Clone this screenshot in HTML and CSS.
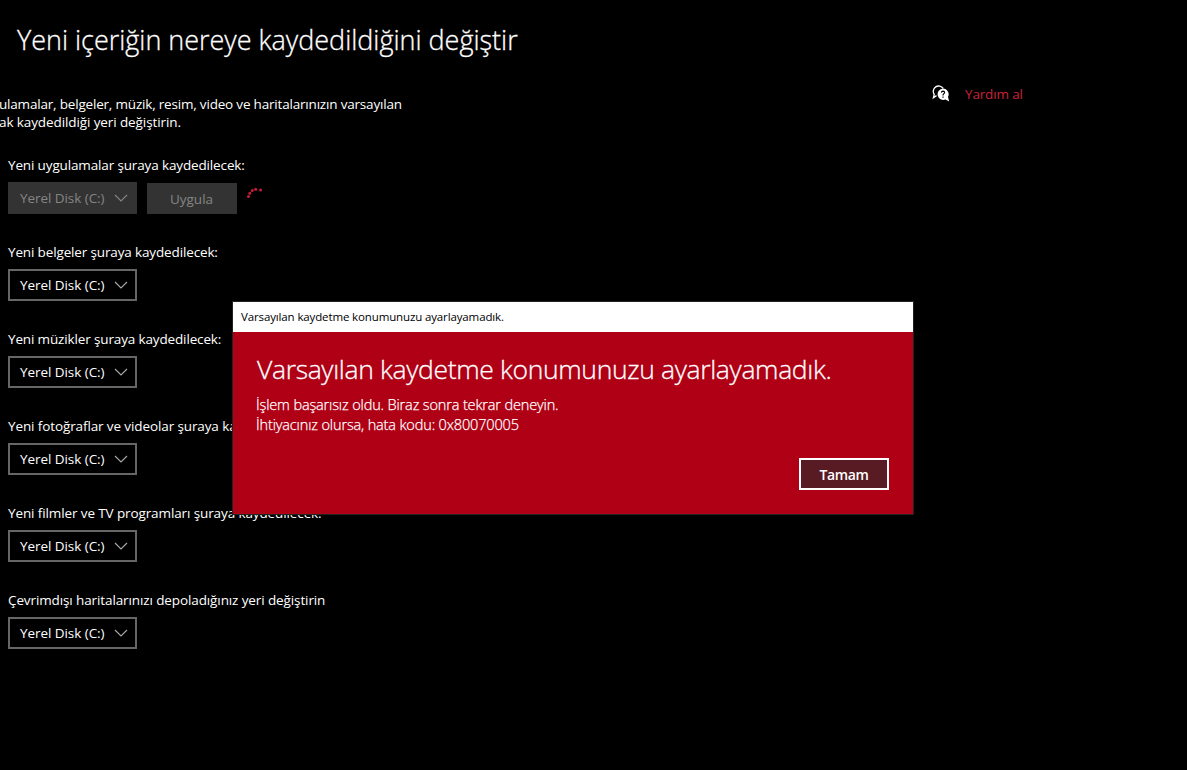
FILE: index.html
```html
<!DOCTYPE html>
<html lang="tr">
<head>
    <meta charset="UTF-8">
    <meta name="viewport" content="width=device-width, initial-scale=1.0">
    <title>Ayarlar</title>
    <link rel="stylesheet" href="styles.css">
</head>
<body>
    <svg class="defs" width="0" height="0">
        <symbol id="chevron" viewBox="0 0 14 8">
            <path d="M1 1 L7 7 L13 1" fill="none" stroke="currentColor" stroke-width="1.1"/>
        </symbol>
    </svg>

    <h1>Yeni içeriğin nereye kaydedildiğini değiştir</h1>

    <div class="content">
        <main>
            <p class="intro">ulamalar, belgeler, müzik, resim, video ve haritalarınızın varsayılan<br><span class="intro-end">ak kaydedildiği yeri değiştirin.</span></p>

            <div class="setting">
                <label>Yeni uygulamalar şuraya kaydedilecek:</label>
                <div class="row">
                    <button class="select disabled"><span>Yerel Disk (C:)</span><svg class="chevron"><use href="#chevron"/></svg></button>
                    <button class="apply">Uygula</button>
                    <svg class="spinner" width="18" height="14" viewBox="0 0 18 14">
                        <circle cx="2.5" cy="10.5" r="1.5"/>
                        <circle cx="3.8" cy="7.2" r="1.5"/>
                        <circle cx="6.3" cy="4.6" r="1.5"/>
                        <circle cx="9.6" cy="3.3" r="1.5"/>
                        <circle cx="14.6" cy="4" r="1.5"/>
                    </svg>
                </div>
            </div>

            <div class="setting">
                <label>Yeni belgeler şuraya kaydedilecek:</label>
                <button class="select"><span>Yerel Disk (C:)</span><svg class="chevron"><use href="#chevron"/></svg></button>
            </div>

            <div class="setting">
                <label>Yeni müzikler şuraya kaydedilecek:</label>
                <button class="select"><span>Yerel Disk (C:)</span><svg class="chevron"><use href="#chevron"/></svg></button>
            </div>

            <div class="setting">
                <label class="label-wide">Yeni fotoğraflar ve videolar şuraya kaydedilecek:</label>
                <button class="select"><span>Yerel Disk (C:)</span><svg class="chevron"><use href="#chevron"/></svg></button>
            </div>

            <div class="setting">
                <label class="label-wide">Yeni filmler ve TV programları şuraya kaydedilecek:</label>
                <button class="select"><span>Yerel Disk (C:)</span><svg class="chevron"><use href="#chevron"/></svg></button>
            </div>

            <div class="setting">
                <label class="label-wide">Çevrimdışı haritalarınızı depoladığınız yeri değiştirin</label>
                <button class="select"><span>Yerel Disk (C:)</span><svg class="chevron"><use href="#chevron"/></svg></button>
            </div>
        </main>

        <aside class="help">
            <svg width="18" height="18" viewBox="0 0 18 18">
                <path d="M4.5 10.6 L1.4 12.8 L2.2 9.4 A5.3 5.3 0 1 1 11.2 3.4" fill="none" stroke="#fff" stroke-width="1.3"/>
                <path d="M11 3.6 A5.7 5.7 0 0 1 16 12 L17.2 16.6 L13.4 14.6 A5.7 5.7 0 1 1 11 3.6 Z" fill="#fff"/>
                <path d="M9.4 7.6 Q9.5 6.1 11 6.1 Q12.6 6.2 12.6 7.5 Q12.5 8.4 11.6 8.9 Q11 9.3 11 10.4 M11 11.5 V12.8" fill="none" stroke="#000" stroke-width="1.2"/>
            </svg>
            <a>Yardım al</a>
        </aside>
    </div>

    <div class="dialog">
        <div class="dialog-bar">Varsayılan kaydetme konumunuzu ayarlayamadık.</div>
        <div class="dialog-body">
            <h2>Varsayılan kaydetme konumunuzu ayarlayamadık.</h2>
            <p>İşlem başarısız oldu. Biraz sonra tekrar deneyin.<br>İhtiyacınız olursa, hata kodu: 0x80070005</p>
            <div class="dialog-actions">
                <button class="ok">Tamam</button>
            </div>
        </div>
    </div>
</body>
</html>
```

FILE: styles.css
```css
* {
    box-sizing: border-box;
}
body {
    margin: 0;
    height: 770px;
    overflow: hidden;
    background-color: #000;
    color: #fff;
    font-family: "Segoe UI", "Open Sans", "Noto Sans", sans-serif;
    font-size: 13.5px;
}
button {
    font-family: inherit;
    font-size: inherit;
    padding: 0;
    color: #fff;
}
.defs {
    display: block;
}
h1 {
    margin: 0;
    padding: 22px 0 0 17px;
    height: 85px;
    font-size: 27px;
    line-height: 36px;
    font-weight: 300;
    letter-spacing: -0.02px;
    white-space: nowrap;
    -webkit-text-stroke: 0.3px;
}
.content {
    display: flex;
}
main {
    width: 932px;
}
.intro {
    margin: 10px 0 0 -1px;
    height: 62px;
    line-height: 18px;
    letter-spacing: -0.19px;
    white-space: nowrap;
}
.intro-end {
    letter-spacing: -0.1px;
}
.setting {
    height: 87px;
    padding-left: 8px;
}
label {
    display: block;
    height: 25px;
    line-height: 17px;
    letter-spacing: -0.14px;
    white-space: nowrap;
}
.label-wide {
    letter-spacing: -0.11px;
}
.row {
    display: flex;
}
.select {
    display: flex;
    align-items: center;
    justify-content: space-between;
    width: 129px;
    height: 32px;
    padding: 0 7px 0 10px;
    border: 2px solid #666;
    background-color: #000;
    letter-spacing: -0.06px;
}
.chevron {
    width: 14px;
    height: 8px;
    color: #aaa;
}
.disabled {
    background-color: #333;
    border-color: #333;
    color: #858585;
}
.disabled .chevron {
    color: #858585;
}
.apply {
    width: 90px;
    height: 31px;
    margin: 1px 0 0 10px;
    padding-right: 1px;
    border: none;
    background-color: #333;
    color: #858585;
}
.spinner {
    margin: 4px 0 0 9px;
    fill: #c41e3a;
}
.help {
    display: flex;
    height: 18px;
}
.help a {
    margin-left: 15px;
    line-height: 18px;
    color: #c9203b;
    letter-spacing: -0.15px;
    white-space: nowrap;
}
.dialog {
    position: absolute;
    left: 232px;
    top: 301px;
    width: 682px;
    height: 214px;
    border: 1px solid #222;
    background-color: #af0016;
}
.dialog-bar {
    height: 30px;
    padding-left: 8px;
    background-color: #fff;
    color: #000;
    font-size: 11.5px;
    line-height: 30px;
    letter-spacing: -0.13px;
}
.dialog-body {
    padding: 19px 24px 24px;
}
h2 {
    margin: 0;
    font-size: 26.5px;
    line-height: 36px;
    font-weight: 300;
    letter-spacing: -0.34px;
    white-space: nowrap;
    -webkit-text-stroke: 0.3px;
}
.dialog-body p {
    margin: 8px 0 0 -1px;
    font-size: 14.5px;
    line-height: 20px;
    font-weight: 300;
    letter-spacing: -0.14px;
    -webkit-text-stroke: 0.25px;
}
.dialog-actions {
    display: flex;
    justify-content: flex-end;
    margin-top: 23px;
}
.ok {
    width: 90px;
    height: 32px;
    border: 2px solid #fff;
    background-color: #581b24;
    font-size: 14px;
    font-weight: 600;
    letter-spacing: -0.4px;
}
```
